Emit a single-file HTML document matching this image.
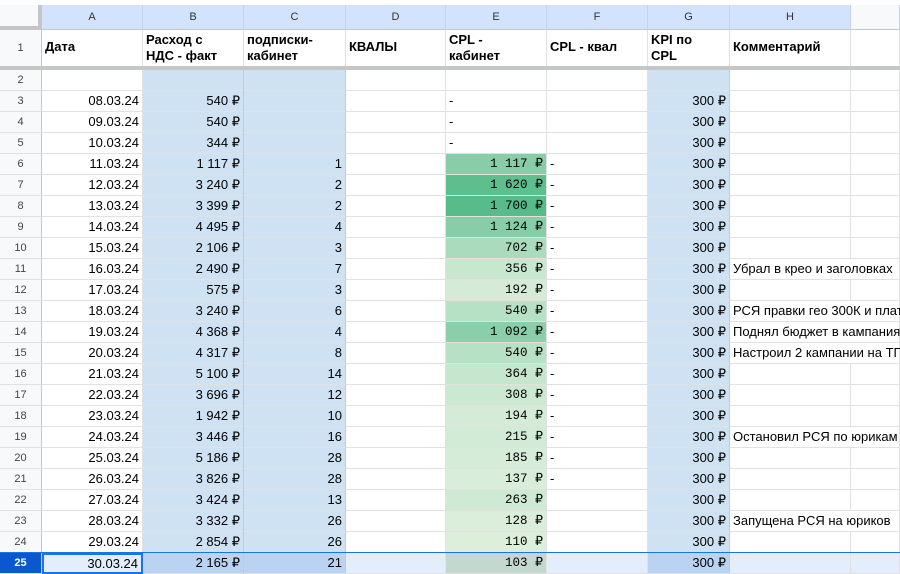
<!DOCTYPE html>
<html><head><meta charset="utf-8"><style>
body{margin:0;width:900px;height:574px;overflow:hidden;background:#fff;font-family:"Liberation Sans",Arial,sans-serif;font-size:13px;color:#000;position:relative}
.c{position:absolute;box-sizing:border-box;border-right:1px solid #e1e1e1;border-bottom:1px solid #e1e1e1;white-space:nowrap;overflow:visible;line-height:20px;padding:0 3px}
.r{text-align:right}
.m{font-family:"Liberation Mono",monospace;font-size:12.5px}
.rh{text-align:center;color:#444;font-size:11px;background:#f8f9fa;border-right:1px solid #c7c7c7}
.ch{text-align:center;color:#333;font-size:11px;background:#d3e3fd;border-right:1px solid #c4d4ee;border-bottom:1px solid #c4c7c5;line-height:24px}
.h{font-weight:bold;line-height:16px;padding-top:2px}
</style></head><body>
<div id="g"></div>
<script>
var X=[0,42,143,244,346,446,547,648,730,851,900];
var g=document.getElementById('g');var out='';
function cell(x0,x1,y,h,txt,cls,st){out+='<div class="c '+(cls||'')+'" style="left:'+x0+'px;top:'+y+'px;width:'+(x1-x0)+'px;height:'+h+'px;'+(st||'')+'">'+txt+'</div>';}
// top strip
out+='<div style="position:absolute;left:0;top:0;width:900px;height:5px;background:#fff"></div>';
cell(0,42,5,25,'','ch','background:#f8f9fa;border-right:4px solid #c4c7c5;border-bottom:4px solid #c4c7c5');
var L='ABCDEFGH';
for(var i=0;i<8;i++)cell(X[i+1],X[i+2],5,25,L[i],'ch');
cell(851,900,5,25,'','ch','background:#f8f9fa');
// row 1
cell(0,42,30,37,'1','rh','line-height:37px');
var H=['Дата','Расход с<br>НДС - факт','подписки-<br>кабинет','КВАЛЫ','CPL -<br>кабинет','CPL - квал','KPI по<br>CPL','Комментарий',''];
for(var i=0;i<9;i++){var one=H[i].indexOf('<br>')<0;cell(X[i+1],X[i+2],30,37,H[i],'h',one?'line-height:34px;padding-top:0':'');}
out+='<div style="position:absolute;left:0;top:66px;width:900px;height:4px;background:#c4c7c5"></div>';
var D=[
[2,'','','','','','',''],
[3,'08.03.24','540','','-',0,'',1],
[4,'09.03.24','540','','-',0,'',1],
[5,'10.03.24','344','','-',0,'',1],
[6,'11.03.24','1 117','1','1 117',1117,'-',1],
[7,'12.03.24','3 240','2','1 620',1620,'-',1],
[8,'13.03.24','3 399','2','1 700',1700,'-',1],
[9,'14.03.24','4 495','4','1 124',1124,'-',1],
[10,'15.03.24','2 106','3','702',702,'-',1],
[11,'16.03.24','2 490','7','356',356,'-',1,'Убрал в крео и заголовках'],
[12,'17.03.24','575','3','192',192,'-',1],
[13,'18.03.24','3 240','6','540',540,'-',1,'РСЯ правки гео 300К и плате'],
[14,'19.03.24','4 368','4','1 092',1092,'-',1,'Поднял бюджет в кампаниях'],
[15,'20.03.24','4 317','8','540',540,'-',1,'Настроил 2 кампании на ТГ'],
[16,'21.03.24','5 100','14','364',364,'-',1],
[17,'22.03.24','3 696','12','308',308,'-',1],
[18,'23.03.24','1 942','10','194',194,'-',1],
[19,'24.03.24','3 446','16','215',215,'-',1,'Остановил РСЯ по юрикам'],
[20,'25.03.24','5 186','28','185',185,'-',1],
[21,'26.03.24','3 826','28','137',137,'-',1],
[22,'27.03.24','3 424','13','263',263,'',1],
[23,'28.03.24','3 332','26','128',128,'',1,'Запущена РСЯ на юриков'],
[24,'29.03.24','2 854','26','110',110,'',1],
[25,'30.03.24','2 165','21','103',103,'',1]];
function grn(v){var t=Math.max(0,Math.min(1,(v-100)/1600));var a=[220,239,220],b=[87,187,138];return 'rgb('+a.map(function(c,i){return Math.round(c+(b[i]-c)*t)}).join(',')+')';}
D.forEach(function(r){
 var n=r[0],y=70+(n-2)*21,sel=n==25;
 var bb='#cfe2f3',rowbg=sel?'#e3edfb':'#fff',bd='border-right:1px solid #b8cde3;';
 if(sel){bb='#bad3f0';}
 if(sel)cell(0,42,y,21,'25','rh','background:#0b57d0;color:#fff;font-weight:bold');
 else cell(0,42,y,21,n,'rh');
 cell(42,143,y,21,r[1],'r',sel?'background:#e3edfb;border:2px solid #1a73e8;line-height:17px':'');
 cell(143,244,y,21,r[2]?r[2]+' ₽':'','r','background:'+bb+';'+bd);
 cell(244,346,y,21,r[3],'r','background:'+bb+';'+bd);
 cell(346,446,y,21,'','','background:'+rowbg);
 var ebg=r[5]?grn(r[5]):rowbg;
 if(sel)ebg='#c3d9d0';
 cell(446,547,y,21,r[5]?r[4]+' ₽':r[4],r[5]?'r m':'','background:'+ebg);
 cell(547,648,y,21,r[6],'','background:'+rowbg);
 cell(648,730,y,21,r[7]?'300 ₽':'','r','background:'+bb+';'+bd);
 cell(730,851,y,21,r[8]||'','','background:'+rowbg+(r[8]?';z-index:2;border-right:none;overflow:visible;':''));
 cell(851,900,y,21,'','','background:'+rowbg);
});
out+='<div style="position:absolute;left:0;top:552px;width:900px;height:1px;background:#1a73e8;z-index:3"></div>';
g.innerHTML=out;
</script>
</body></html>
